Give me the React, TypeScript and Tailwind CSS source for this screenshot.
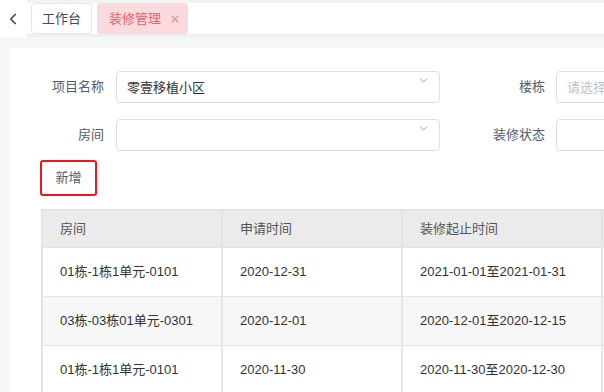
import { ChevronLeft, ChevronDown, X } from "lucide-react";

const rows = [
  { room: "01栋-1栋1单元-0101", apply: "2020-12-31", range: "2021-01-01至2021-01-31" },
  { room: "03栋-03栋01单元-0301", apply: "2020-12-01", range: "2020-12-01至2020-12-15" },
  { room: "01栋-1栋1单元-0101", apply: "2020-11-30", range: "2020-11-30至2020-12-30" },
];

function Select({ value, placeholder, arrow, width }: { value?: string; placeholder?: string; arrow?: boolean; width: string }) {
  return (
    <div className={`${width} h-[32px] shrink-0 flex items-start justify-between border border-[#dcdfe6] rounded-[4px] bg-white pl-[10px] pr-[9px]`}>
      <span className={`mt-[6px] text-[13px] ${value ? "text-[#333]" : "text-[#c0c4cc]"} whitespace-nowrap`}>
        {value ?? placeholder}
      </span>
      {arrow && <ChevronDown size={13} strokeWidth={1.6} className="mt-[2px] text-[#8a93a6]" />}
    </div>
  );
}

export default function App() {
  return (
    <div
      className="w-[604px] h-[392px] overflow-hidden bg-[#f5f6f8] flex flex-col"
      style={{ fontFamily: '"Liberation Sans", "Noto Sans CJK SC", sans-serif' }}
    >
      {/* tabs header */}
      <div className="h-[37px] flex shrink-0">
        <div className="w-[27px] bg-white flex items-center justify-center">
          <ChevronLeft size={18} strokeWidth={2.2} className="text-[#34495e] -ml-[2px]" />
        </div>
        <div className="flex-1 bg-white border-t-[3px] border-t-[#f2f2f3] border-b-[3px] border-b-[#eeeff1] flex items-center gap-[5px] pl-[4px]">
          <div className="h-[31px] w-[61px] justify-center flex items-center border border-[#e4e6ea] rounded-[4px] bg-white text-[13px] text-[#3c4a5e]">
            工作台
          </div>
          <div className="h-[31px] w-[91px] pl-[12px] flex items-center gap-[8px] rounded-[4px] bg-[#fbdadd] text-[13px] text-[#e8636a]">
            装修管理
            <X size={12} strokeWidth={2.2} className="text-[#ec8a8f]" />
          </div>
        </div>
      </div>

      {/* content */}
      <div className="flex-1 min-h-0 pt-[11px] pl-[10px]">
        <div className="h-full bg-white pt-[23px] overflow-hidden">
          <div className="flex flex-col gap-[16px]">
            <div className="flex items-center">
              <div className="w-[106px] shrink-0 whitespace-nowrap pr-[12px] text-right text-[13px] text-[#555c6b]">项目名称</div>
              <Select value="零壹移植小区" arrow width="w-[324px]" />
              <div className="w-[116px] shrink-0 whitespace-nowrap pr-[11px] text-right text-[13px] text-[#555c6b]">楼栋</div>
              <Select placeholder="请选择楼栋" width="w-[120px]" />
            </div>
            <div className="flex items-center">
              <div className="w-[106px] shrink-0 whitespace-nowrap pr-[12px] text-right text-[13px] text-[#555c6b]">房间</div>
              <Select arrow width="w-[324px]" />
              <div className="w-[116px] shrink-0 whitespace-nowrap pr-[11px] text-right text-[13px] text-[#555c6b]">装修状态</div>
              <Select width="w-[120px]" />
            </div>
          </div>

          <div className="pl-[30px] mt-[9px]">
            <div className="w-[57px] h-[36px] border-2 border-[#f0161b] rounded-[3px] flex items-center justify-center text-[13px] text-[#555c6b]">
              新增
            </div>
          </div>

          <div className="ml-[31px] mt-[13px] w-[563px] border-t-2 border-l-2 border-[#e3e3e3]">
            <div className="flex h-[37px] bg-[#ebebeb] text-[13px] text-[#555] border-b border-[#e3e3e3]">
              <div className="w-[180px] pl-[17px] flex items-center border-r-2 border-[#e3e3e3]">房间</div>
              <div className="w-[180px] pl-[17px] flex items-center border-r-2 border-[#e3e3e3]">申请时间</div>
              <div className="w-[200px] pl-[17px] flex items-center border-r-2 border-[#e3e3e3]">装修起止时间</div>
            </div>
            {rows.map((r, i) => (
              <div
                key={i}
                className={`flex h-[49px] text-[13px] text-[#333] border-b border-[#e6e6e6] ${i % 2 === 1 ? "bg-[#f7f7f7]" : "bg-white"}`}
              >
                <div className="w-[180px] pl-[17px] flex items-center border-r-2 border-[#e6e6e6] whitespace-nowrap">{r.room}</div>
                <div className="w-[180px] pl-[17px] flex items-center border-r-2 border-[#e6e6e6]">{r.apply}</div>
                <div className="w-[200px] pl-[17px] flex items-center border-r-2 border-[#e6e6e6]">{r.range}</div>
              </div>
            ))}
          </div>
        </div>
      </div>
    </div>
  );
}
